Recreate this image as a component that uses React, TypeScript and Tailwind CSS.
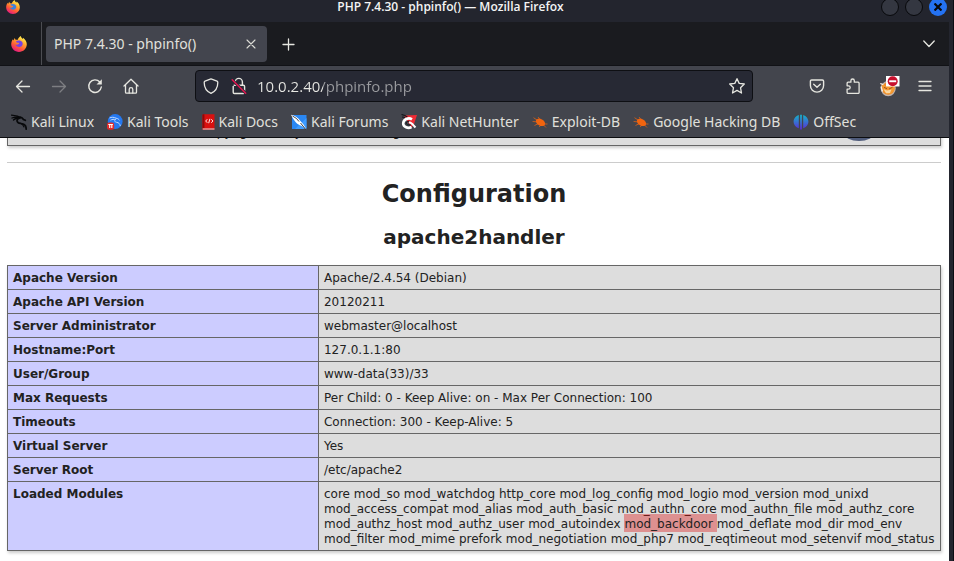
import React from "react";

type IconProps = { className?: string };

function FirefoxLogo({ id, size }: { id: string; size: number }) {
  return (
    <svg className="shrink-0" width={size} height={size} viewBox="0 0 16 16" aria-hidden="true">
      <defs>
        <linearGradient id={id} x1="0.8" y1="0.1" x2="0.3" y2="1">
          <stop offset="0" stopColor="#fff44f" />
          <stop offset="0.35" stopColor="#ffa02e" />
          <stop offset="0.65" stopColor="#ff5a36" />
          <stop offset="1" stopColor="#e31587" />
        </linearGradient>
      </defs>
      <path
        d="M9.8 0c.3 1.4 1.1 2 2 3 .3-.3.3-.8.2-1.200C14 3 15.800 5.600 15.800 8.300 15.800 12.600 12.300 16 8 16S.2 12.600.2 8.300c0-2 .7-3.800 1.700-5.100l.5 1.300C3 3.600 3.300 2.700 3.600 2l1 1.800c.7-.1 1.300 0 1.900.2C7.200 2.300 8.300.8 9.800 0Z"
        fill={`url(#${id})`}
      />
      <path
        d="M5 5.200c2-1.100 4.600-.9 5.800.4.900.9 1.100 2.100.7 3.200-.5 1.500-1.900 2.300-3.400 2.200-1.700-.1-3.200-1-3.700-2.500 1 .5 2 .3 2.700-.3.5-.4 1-.4 1.100-.8 0-.4-.5-.7-1.100-.7-.9 0-1.800-.5-2.100-1.500Z"
        fill={id === "fx-title" ? "#3b82e0" : "#7542e5"}
      />
    </svg>
  );
}

function BackIcon() {
  return (
    <svg width="16" height="16" viewBox="0 0 16 16" fill="none" stroke="currentColor" strokeWidth="1.300" strokeLinecap="round" strokeLinejoin="round" aria-hidden="true">
      <path d="M14.500 8.500h-13M7 3 1.500 8.500 7 14" />
    </svg>
  );
}

function ForwardIcon() {
  return (
    <svg width="16" height="16" viewBox="0 0 16 16" fill="none" stroke="currentColor" strokeWidth="1.300" strokeLinecap="round" strokeLinejoin="round" aria-hidden="true">
      <path d="M1.500 8.500h13M9 3l5.500 5.500L9 14" />
    </svg>
  );
}

function ReloadIcon() {
  return (
    <svg width="16" height="16" viewBox="0 0 16 16" fill="none" aria-hidden="true">
      <path d="M12.800 4A6.300 6.300 0 1 0 14.300 9" stroke="currentColor" strokeWidth="1.400" strokeLinecap="round" />
      <path d="M14.800 1.200v5.300H9.500Z" fill="currentColor" />
    </svg>
  );
}

function HomeIcon() {
  return (
    <svg width="16" height="16" viewBox="0 0 16 16" fill="none" stroke="currentColor" strokeWidth="1.300" strokeLinecap="round" strokeLinejoin="round" aria-hidden="true">
      <path d="M1 8 8 1.200 15 8" />
      <path d="M2.500 7v7.200c0 .6.300.9.900.9h9.200c.6 0 .9-.3.900-.9V7" />
      <path d="M6.200 15v-3.600a1.800 1.800 0 0 1 3.600 0V15" />
    </svg>
  );
}

function ShieldIcon() {
  return (
    <svg width="16" height="16" viewBox="0 0 16 16" fill="none" stroke="currentColor" strokeWidth="1.300" strokeLinejoin="round" aria-hidden="true">
      <path d="M8 .9 14 3.200c.7.300.8.600.8 1.200C14.800 9.500 12 13.500 8 15.300 4 13.500 1.200 9.500 1.200 4.400c0-.6.100-.9.800-1.200Z" />
    </svg>
  );
}

function LockSlashIcon() {
  return (
    <svg width="16" height="18" viewBox="0 0 16 18" fill="none" aria-hidden="true">
      <path d="M4.200 7V5a3.600 3.600 0 0 1 7.200 0v2.500M2.600 8.200h9.800c.8 0 1.200.4 1.200 1.200v5.900c0 .8-.4 1.200-1.200 1.200H3.400c-.8 0-1.200-.4-1.200-1.200V9" stroke="currentColor" strokeWidth="1.400" />
      <path d="M1.200 2.700 14.700 16.200" stroke="#272934" strokeWidth="3" />
      <path d="M1.200 2.700 14.700 16.200" stroke="#e21550" strokeWidth="1.500" strokeLinecap="round" />
    </svg>
  );
}

function StarIcon() {
  return (
    <svg width="16" height="16" viewBox="1 1 16 16" fill="none" stroke="currentColor" strokeWidth="1.300" strokeLinejoin="round" aria-hidden="true">
      <path d="m9 1.700 2.200 4.700 5.100.6-3.800 3.700 1 5.300L9 13.400 4.500 16l1-5.300L1.700 7l5.100-.6Z" />
    </svg>
  );
}

function PocketIcon() {
  return (
    <svg width="16" height="16" viewBox="0 0 16 16" fill="none" stroke="currentColor" strokeWidth="1.400" strokeLinecap="round" strokeLinejoin="round" aria-hidden="true">
      <path d="M2.700 2h10.600c.8 0 1.300.5 1.300 1.300v4.200a6.600 6.600 0 0 1-13.200 0V3.300C1.400 2.500 1.900 2 2.700 2Z" />
      <path d="m4.700 6.200 3.300 3 3.300-3" />
    </svg>
  );
}

function PuzzleIcon() {
  return (
    <svg width="16" height="16" viewBox="0 0 16 16" fill="none" stroke="currentColor" strokeWidth="1.300" strokeLinejoin="round" aria-hidden="true">
      <path d="M2.100 7.800V5.200c0-.7.300-1 1-1h2.800V2.700a1.700 1.700 0 0 1 3.400 0v1.500h3.800c.7 0 1 .3 1 1v9.200c0 .7-.3 1-1 1h-10c-.7 0-1-.3-1-1v-3.200h1.400a1.700 1.700 0 0 0 0-3.400Z" />
    </svg>
  );
}

function FoxIcon() {
  return (
    <svg width="22" height="22" viewBox="0 0 22 22" aria-hidden="true">
      <circle cx="10.200" cy="13.600" r="6.900" fill="#f08a24" stroke="#c3b4aa" strokeWidth="1.300" />
      <path d="M3.300 9.200 6 10l3 2.500 3.500-1.500 4.500-1-.5 5-3 3.500-4 .8-4-2.800Z" fill="#f49a32" />
      <path d="m5.500 14 3.500 1.500 4.500-1L12 18l-4 .3Z" fill="#fbd7a0" />
      <path d="m6 12.300 3 1.500M11 14l3.500-1.700" stroke="#a8531a" strokeWidth="1" fill="none" />
      <path d="m2.300 8.500 3 1.200M3 11.500l1.500 5" stroke="#f6efe8" strokeWidth="1.300" fill="none" />
      <path d="M8 1h13.500v10.500H8Z" fill="#fff" />
      <circle cx="14.700" cy="6.200" r="5" fill="#c8102e" />
      <path d="M11.200 5.300h7v1.900h-7Z" fill="#fff" />
    </svg>
  );
}

function MenuIcon() {
  return (
    <svg width="14" height="12" viewBox="0 0 14 12" stroke="currentColor" strokeWidth="1.300" strokeLinecap="round" aria-hidden="true">
      <path d="M1 1.500h12M1 6h12M1 10.500h12" />
    </svg>
  );
}

function DragonIcon() {
  return (
    <svg width="16" height="16" viewBox="0 0 16 16" fill="none" stroke="#08090b" strokeLinecap="round" aria-hidden="true">
      <path d="M.5 1.200C3 1.500 6.500 1.200 9.500 3.500M1 4c2.500-1 5-1 8.500-.5M2.500 6c1-1.200 3-1.800 4.500-2" strokeWidth="1.300" />
      <path d="M9 3.200c1.500 0 2.500.8 3.500 2.300l1.800.8" strokeWidth="1.800" />
      <path d="M9 3.800C6 4.500 5.200 7 7 8.500c1.500 1.200 4.500.8 6.500 2.200 1.200.8 1.700 2.500 1.700 4.500" strokeWidth="1.700" />
      <path d="M9.500 9.200c1.800.8 3 2 3.500 3.800" strokeWidth="1.100" />
    </svg>
  );
}

function ToolsIcon() {
  return (
    <svg width="16" height="16" viewBox="0 0 16 16" aria-hidden="true">
      <circle cx="8.200" cy="7.500" r="7.400" fill="#2478f0" />
      <path d="M2.500 4c2-1 4.500-1 6.500.2 2 .2 3 1.300 3.500 2.200M3.500 6.200c1.500-1 3.500-1 5-.7M9 5C7 6 7.500 8 9.500 8.300c2.300.3 3.500 1.500 3.800 3.700" stroke="#bcd8ff" strokeWidth="1" fill="none" />
      <rect x="0" y="8.500" width="7.200" height="7.200" rx="2.200" fill="#e02b2b" />
      <path d="M1.300 10.500h4.600M2.700 10.500V14M4.800 10.500V14" stroke="#fff" strokeWidth="1.100" fill="none" />
    </svg>
  );
}

function DocsIcon() {
  return (
    <svg width="13" height="16" viewBox="0 0 13 16" aria-hidden="true">
      <path d="M.5 1.200C.5.500 1 .2 1.600.2h10.900v15.500H.5Z" fill="#d9100f" />
      <path d="M.5 1.200C.5.500 1 .2 1.600.2h.8v14H.5Z" fill="#8d0909" />
      <path d="M.7 14.500h11.800v1H.7Z" fill="#e8dada" />
      <path d="M5.300 5.200 3.700 7l1.600 1.800M9.300 5.200 10.900 7 9.300 8.800M7.900 4.800 6.700 9.200" stroke="#fff" strokeWidth=".9" fill="none" />
    </svg>
  );
}

function ForumsIcon() {
  return (
    <svg width="16" height="16" viewBox="0 0 16 16" aria-hidden="true">
      <path d="M1 1h14.500v14H1Z" fill="#2a87f3" />
      <path d="M4 15 15.500 4v9.500L14.500 15Z" fill="#3f9cff" />
      <path d="M0 .8c3.500.7 7 2.700 9.200 6l3.300 3.800 3 5-5.200-3.800C6.500 10.700 3.500 8 0 .8Z" fill="#fff" />
      <path d="m1.500 2 4 2.500 2.500 3M9.500 9l5.300 6.500" stroke="#15171c" strokeWidth=".8" fill="none" />
    </svg>
  );
}

function NetHunterIcon() {
  return (
    <svg width="16" height="16" viewBox="0 0 16 16" aria-hidden="true">
      <path d="M3 1.500 16 1l-3 9-2.500 3.500Z" fill="#ee2b34" />
      <path d="M.5.500C3 1 5 2 6.500 3.200M1 3l3 .5" stroke="#15171c" strokeWidth="1.200" fill="none" />
      <path d="M11 5.300C7.500 3 2.200 5.300 2.200 9.500c0 3.500 4.800 5.500 8.300 3.500" stroke="#fff" strokeWidth="2.600" fill="none" />
      <path d="M9 7.500C6.200 6.700 4.600 8.500 5.500 10c1 1.500 3.500.5 4.500 1.200" stroke="#15171c" strokeWidth="1" fill="none" />
      <path d="M8 8.200c2.500 0 3.500 2 6.500 5.300" stroke="#fff" strokeWidth="2" fill="none" />
    </svg>
  );
}

function BugIcon() {
  return (
    <svg width="16" height="16" viewBox="0 0 16 16" fill="#f0640f" stroke="#f0640f" aria-hidden="true">
      <ellipse cx="8.500" cy="8.300" rx="5" ry="3.200" transform="rotate(28 8.500 8.300)" stroke="none" />
      <path d="M1.500 3.700 5 6M.6 7.500l4 .3M2.500 11.500l4-2M6 3l2 2.500M12.500 10h3M11.500 11l2.500 2.500M7 12.800l2.500-2" strokeWidth=".7" fill="none" />
    </svg>
  );
}

function OffSecIcon() {
  return (
    <svg width="16" height="16" viewBox="0 0 16 16" aria-hidden="true">
      <defs>
        <linearGradient id="offsec" x1="0" y1="0" x2="0" y2="1">
          <stop offset="0" stopColor="#14b5c9" />
          <stop offset="1" stopColor="#5b2bd6" />
        </linearGradient>
      </defs>
      <path d="M5.800.9v13.400C2.800 13.400.6 10.800.6 7.600S2.800 1.800 5.800.9ZM10.200.9c3 .9 5.200 3.500 5.200 6.700s-2.200 5.800-5.200 6.700ZM7.100.7h1.800V15.500H7.100Z" fill="url(#offsec)" />
    </svg>
  );
}

const bookmarks: { label: string; Icon: (p: IconProps) => React.ReactElement }[] = [
  { label: "Kali Linux", Icon: DragonIcon },
  { label: "Kali Tools", Icon: ToolsIcon },
  { label: "Kali Docs", Icon: DocsIcon },
  { label: "Kali Forums", Icon: ForumsIcon },
  { label: "Kali NetHunter", Icon: NetHunterIcon },
  { label: "Exploit-DB", Icon: BugIcon },
  { label: "Google Hacking DB", Icon: BugIcon },
  { label: "OffSec", Icon: OffSecIcon },
];

const rows: [string, React.ReactNode][] = [
  ["Apache Version", "Apache/2.4.54 (Debian)"],
  ["Apache API Version", "20120211"],
  ["Server Administrator", "webmaster@localhost"],
  ["Hostname:Port", "127.0.1.1:80"],
  ["User/Group", "www-data(33)/33"],
  ["Max Requests", "Per Child: 0 - Keep Alive: on - Max Per Connection: 100"],
  ["Timeouts", "Connection: 300 - Keep-Alive: 5"],
  ["Virtual Server", "Yes"],
  ["Server Root", "/etc/apache2"],
  [
    "Loaded Modules",
    <>
      core mod_so mod_watchdog http_core mod_log_config mod_logio mod_version mod_unixd mod_access_compat mod_alias
      mod_auth_basic mod_authn_core mod_authn_file mod_authz_core mod_authz_host mod_authz_user mod_autoindex{" "}
      <mark className="bg-[rgba(221,0,0,0.35)] text-inherit shadow-[0_-3px_0_rgba(221,0,0,0.35),0_1px_0_rgba(221,0,0,0.35)]">
        mod_backdoor{" "}
      </mark>
      mod_deflate mod_dir mod_env mod_filter mod_mime prefork mod_negotiation mod_php7 mod_reqtimeout mod_setenvif
      mod_status
    </>,
  ],
];

function ToolButton({ label, dim, children }: { label: string; dim?: boolean; children: React.ReactNode }) {
  return (
    <button
      aria-label={label}
      className={
        dim
          ? "flex h-9 w-9 items-center justify-center text-[#7d7e82]"
          : "flex h-9 w-9 items-center justify-center text-[#e6e6e0]"
      }
    >
      {children}
    </button>
  );
}

function TitleBar() {
  return (
    <div className="flex h-[22px] items-start bg-[#23252e] px-1.5">
      <FirefoxLogo id="fx-title" size={14} />
      <p className="flex-1 text-center font-['Open_Sans',sans-serif] text-[12px] leading-[14px] font-semibold text-[#f4f4f4]">
        PHP 7.4.30 - phpinfo() — Mozilla Firefox
      </p>
      <div className="-mt-0.5 flex shrink-0 gap-1.5">
        <button aria-label="Minimize" className="h-[18px] w-[18px] rounded-full border border-[#08090c] bg-[#343741]" />
        <button aria-label="Maximize" className="h-[18px] w-[18px] rounded-full border border-[#08090c] bg-[#343741]" />
        <button aria-label="Close window" className="flex h-[18px] w-[18px] items-center justify-center rounded-full bg-[#2472f2]">
          <svg width="8" height="8" viewBox="0 0 8 8" stroke="#07080c" strokeWidth="2.200" aria-hidden="true">
            <path d="m.5.500 7 7M7.500.500l-7 7" />
          </svg>
        </button>
      </div>
    </div>
  );
}

function TabBar() {
  return (
    <div className="flex h-11 items-center border-b border-[#111216] bg-[#1a1b1f]">
      <div className="flex h-full w-[42px] items-center border-r border-[#4c4d52] pl-[11px]">
        <FirefoxLogo id="fx-tab" size={16} />
      </div>
      <div role="tab" aria-selected="true" className="ml-1 flex h-9 w-[221px] items-center justify-between rounded bg-[#43454e] px-2">
        <span className="text-[14px] leading-5 text-[#e0e0dc]">PHP 7.4.30 - phpinfo()</span>
        <button aria-label="Close tab" className="flex h-4 w-4 items-center justify-center text-[#dcdcd6]">
          <svg width="10" height="10" viewBox="0 0 10 10" stroke="currentColor" strokeWidth="1.100" strokeLinecap="round" aria-hidden="true">
            <path d="m1 1 8 8M9 1 1 9" />
          </svg>
        </button>
      </div>
      <button aria-label="New tab" className="ml-1 flex h-9 w-9 items-center justify-center text-[#e6e6e0]">
        <svg width="14" height="14" viewBox="0 0 14 14" stroke="currentColor" strokeWidth="1.300" strokeLinecap="round" aria-hidden="true">
          <path d="M6.500 2v11M1 7.500h11" />
        </svg>
      </button>
      <button aria-label="List all tabs" className="mr-0.5 ml-auto flex h-9 w-9 items-center justify-center text-[#e6e6e0]">
        <svg width="12" height="8" viewBox="0 0 12 8" fill="none" stroke="currentColor" strokeWidth="1.300" strokeLinecap="round" strokeLinejoin="round" aria-hidden="true">
          <path d="M.8 1 6 6.500 11.200 1" />
        </svg>
      </button>
    </div>
  );
}

function Toolbar() {
  return (
    <div className="border-b border-[#0c0d10] bg-[#43454d] pt-0.5">
      <div className="flex items-center pr-1.5 pl-[5px]">
        <ToolButton label="Back"><BackIcon /></ToolButton>
        <ToolButton label="Forward" dim><ForwardIcon /></ToolButton>
        <ToolButton label="Reload"><ReloadIcon /></ToolButton>
        <ToolButton label="Home"><HomeIcon /></ToolButton>
        <div className="mx-[46px] flex h-8 flex-1 items-center rounded border border-[#0e0f13] bg-[#272934] px-[7px] text-[#e6e6e0]">
          <ShieldIcon />
          <span className="ml-3 flex"><LockSlashIcon /></span>
          <input
            type="text"
            aria-label="Address"
            defaultValue="10.0.2.40/phpinfo.php"
            className="ml-2.5 h-6 min-w-0 flex-1 bg-[linear-gradient(to_right,#e8e8e4_66px,#9a9b9f_66px)] bg-clip-text font-['Open_Sans',sans-serif] text-[15px] text-transparent outline-none"
          />
          <button aria-label="Bookmark this page"><StarIcon /></button>
        </div>
        <ToolButton label="Save to Pocket"><PocketIcon /></ToolButton>
        <ToolButton label="Extensions"><PuzzleIcon /></ToolButton>
        <ToolButton label="FoxyProxy"><FoxIcon /></ToolButton>
        <ToolButton label="Menu"><MenuIcon /></ToolButton>
      </div>
      <nav className="flex h-[33px] items-center gap-[13px] pt-0.5 pl-[11px]">
        {bookmarks.map(({ label, Icon }) => (
          <a key={label} href="#" className="flex items-center gap-1 text-[14px] leading-5 whitespace-nowrap text-[#e0e0dc]">
            <Icon />
            {label}
          </a>
        ))}
      </nav>
    </div>
  );
}

function Page() {
  return (
    <main className="bg-white pr-2 pb-[10px] pl-[7px] font-['DejaVu_Sans',sans-serif] text-[#222]">
      <div className="-mt-4 flex h-6 items-start justify-between border border-[#666] bg-[#ddd] px-[5px] pt-0.5 text-[12px] leading-[15px] shadow-[1px_2px_3px_#ccc]">
        <p className="whitespace-pre">{"    with Zend OPcache v7.4.30, Copyright (c), by Zend Technologies"}</p>
        <svg className="mr-[61px]" width="30" height="18" viewBox="0 0 30 18" aria-hidden="true">
          <ellipse cx="15" cy="8" rx="15" ry="8" fill="#4f5b7a" />
        </svg>
      </div>
      <hr className="mt-4 border-t border-[#ccc]" />
      <h1 className="mt-[17px] text-center text-2xl leading-7 font-bold">Configuration</h1>
      <h2 className="mt-[17px] text-center text-xl leading-6 font-bold">apache2handler</h2>
      <table className="mt-4 w-full border-collapse text-left text-[12px] leading-[15px] shadow-[1px_2px_3px_#ccc]">
        <tbody>
          {rows.map(([name, value]) => (
            <tr key={name}>
              <th scope="row" className="w-1/3 border border-[#666] bg-[#ccf] px-[5px] pt-[5px] pb-[3px] align-top font-bold">
                {name}
              </th>
              <td className="border border-[#666] bg-[#ddd] px-[5px] pt-[5px] pb-[3px] align-top">{value}</td>
            </tr>
          ))}
        </tbody>
      </table>
    </main>
  );
}

export default function App() {
  return (
    <div className="flex min-h-screen flex-col border-r border-[#0b0c12] bg-[#23252e] font-['Noto_Sans',sans-serif]">
      <header className="relative z-10">
        <TitleBar />
        <div className="mr-1">
          <TabBar />
          <Toolbar />
        </div>
      </header>
      <div className="mr-1 flex-1 bg-white">
        <Page />
      </div>
    </div>
  );
}
